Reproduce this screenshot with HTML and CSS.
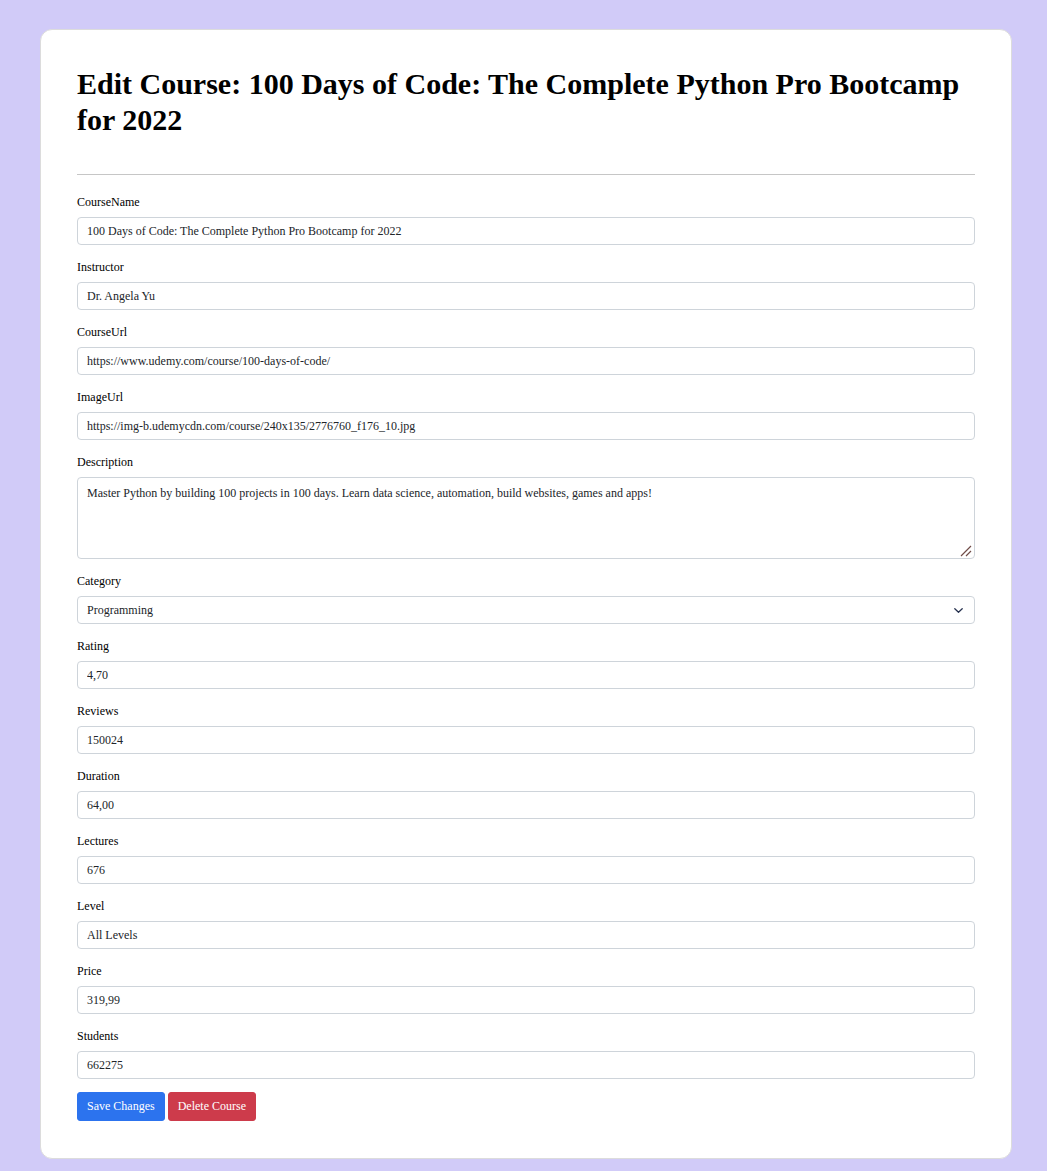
FILE: index.html
```html
<!DOCTYPE html>
<html lang="en">
<head>
<meta charset="utf-8">
<title>Edit Course</title>
<link rel="stylesheet" href="styles.css">
</head>
<body>
<div class="card">
  <h1 class="title">Edit Course: 100 Days of Code: The Complete Python Pro Bootcamp for 2022</h1>
  <hr class="divider">
  <form class="form">
    <div class="field">
      <label class="label">CourseName</label>
      <input class="control" type="text" value="100 Days of Code: The Complete Python Pro Bootcamp for 2022">
    </div>
    <div class="field">
      <label class="label">Instructor</label>
      <input class="control" type="text" value="Dr. Angela Yu">
    </div>
    <div class="field">
      <label class="label">CourseUrl</label>
      <input class="control" type="text" value="https://www.udemy.com/course/100-days-of-code/">
    </div>
    <div class="field">
      <label class="label">ImageUrl</label>
      <input class="control" type="text" value="https://img-b.udemycdn.com/course/240x135/2776760_f176_10.jpg">
    </div>
    <div class="field">
      <label class="label">Description</label>
      <textarea class="control control--area">Master Python by building 100 projects in 100 days. Learn data science, automation, build websites, games and apps!</textarea>
    </div>
    <div class="field">
      <label class="label">Category</label>
      <select class="control control--select">
        <option>Programming</option>
      </select>
    </div>
    <div class="field">
      <label class="label">Rating</label>
      <input class="control" type="text" value="4,70">
    </div>
    <div class="field">
      <label class="label">Reviews</label>
      <input class="control" type="text" value="150024">
    </div>
    <div class="field">
      <label class="label">Duration</label>
      <input class="control" type="text" value="64,00">
    </div>
    <div class="field">
      <label class="label">Lectures</label>
      <input class="control" type="text" value="676">
    </div>
    <div class="field">
      <label class="label">Level</label>
      <input class="control" type="text" value="All Levels">
    </div>
    <div class="field">
      <label class="label">Price</label>
      <input class="control" type="text" value="319,99">
    </div>
    <div class="field field--last">
      <label class="label">Students</label>
      <input class="control" type="text" value="662275">
    </div>
    <div class="actions">
      <button type="button" class="btn btn--primary">Save Changes</button>
      <button type="button" class="btn btn--danger">Delete Course</button>
    </div>
  </form>
</div>
</body>
</html>
```
FILE: styles.css
```css
html, body {
  margin: 0;
  padding: 0;
}
body {
  background: #d1cbf8;
  font-family: "Liberation Serif", "Times New Roman", serif;
  color: #000;
  padding: 29px 35px 14px 40px;
}
.card {
  background: #fff;
  border: 1px solid #dcdcdc;
  border-radius: 12px;
  padding: 36px 36px 37px 36px;
}
.title {
  margin: 0;
  font-size: 30px;
  font-weight: bold;
  line-height: 36px;
}
.divider {
  border: 0;
  border-top: 1px solid #c6c6c6;
  height: 0;
  margin: 36px 0 20px 0;
}
.form {
  margin: 0;
}
.field {
  margin-bottom: 15px;
}
.field--last {
  margin-bottom: 13px;
}
.label {
  display: block;
  font-size: 12px;
  line-height: 14px;
  margin-bottom: 8px;
}
.control {
  display: block;
  box-sizing: border-box;
  width: 100%;
  height: 28px;
  margin: 0;
  padding: 6px 9px;
  font-family: "Liberation Serif", "Times New Roman", serif;
  font-size: 12px;
  line-height: 14px;
  color: #212529;
  background: #fff;
  border: 1px solid #ced4da;
  border-radius: 4px;
  outline: none;
}
.control--area {
  height: 82px;
  padding-top: 8px;
  resize: none;
  background-image: url("data:image/svg+xml,%3Csvg xmlns='http://www.w3.org/2000/svg' width='12' height='12' viewBox='0 0 12 12'%3E%3Cpath d='M11 1L1 11M11 6L6 11' fill='none' stroke='%23704c48' stroke-width='1.2'/%3E%3C/svg%3E");
  background-repeat: no-repeat;
  background-position: right 2px bottom 1px;
  background-size: 12px 12px;
}
.control--select {
  appearance: none;
  -webkit-appearance: none;
  padding-right: 30px;
  background-image: url("data:image/svg+xml,%3Csvg xmlns='http://www.w3.org/2000/svg' width='9' height='5' viewBox='0 0 9 5'%3E%3Cpath d='M0.8 0.8l3.7 3.4 3.7-3.4' fill='none' stroke='%23283350' stroke-width='1.3' stroke-linecap='round' stroke-linejoin='round'/%3E%3C/svg%3E");
  background-repeat: no-repeat;
  background-position: right 11px center;
  background-size: 9px 5px;
}
.actions {
  display: flex;
  gap: 3px;
}
.btn {
  box-sizing: border-box;
  height: 29px;
  padding: 0 9px;
  border: 1px solid transparent;
  border-radius: 3px;
  font-family: "Liberation Serif", "Times New Roman", serif;
  font-size: 12px;
  color: #fff;
  cursor: pointer;
}
.btn--primary {
  background: #2c73ee;
  border-color: #2c73ee;
}
.btn--danger {
  background: #cd3b4b;
  border-color: #cd3b4b;
}
```
